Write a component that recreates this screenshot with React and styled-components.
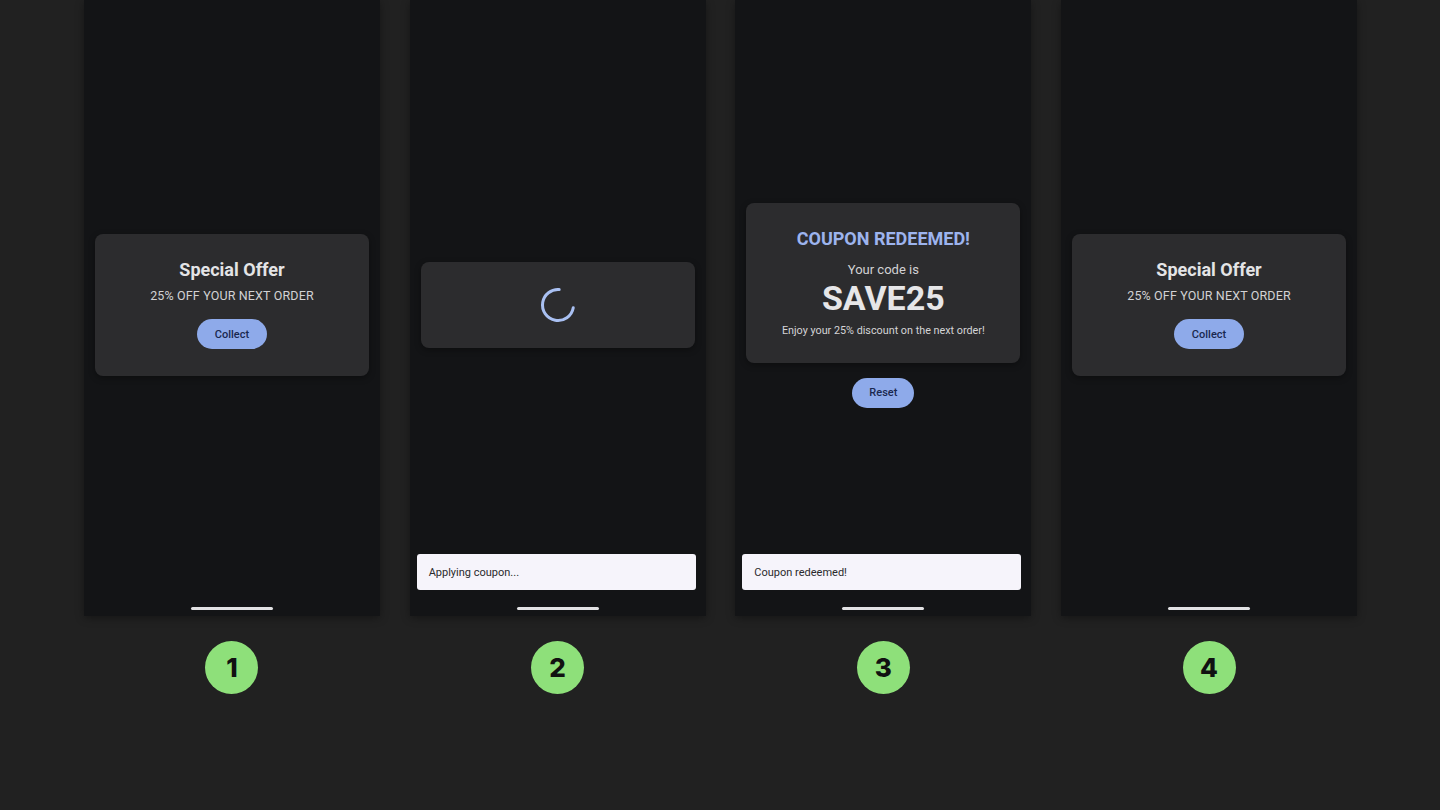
import React from 'react';
import styled, { createGlobalStyle } from 'styled-components';

const GlobalStyle = createGlobalStyle`
  html, body {
    margin: 0;
    padding: 0;
    background: #212121;
  }
  body {
    font-family: Roboto, "Noto Sans", sans-serif;
  }
`;

const Page = styled.main`
  width: 1440px;
  height: 810px;
  overflow: hidden;
  background: #212121;
  display: flex;
  justify-content: center;
  gap: 29.7px;
  padding-left: 1px;
  box-sizing: border-box;
`;

const Column = styled.section`
  width: 296px;
  display: flex;
  flex-direction: column;
  align-items: center;
`;

const Phone = styled.div`
  position: relative;
  width: 296px;
  height: 616px;
  background: #131416;
  box-shadow: 0 2px 8px rgba(0, 0, 0, 0.35);
  display: flex;
  flex-direction: column;
`;

const Screen = styled.div`
  flex: 1;
  display: flex;
  flex-direction: column;
  align-items: center;
  justify-content: center;
  padding: 3px 11px 0;
`;

const HomeBar = styled.div`
  height: 9px;
  display: flex;
  justify-content: center;
  align-items: flex-start;

  &::before {
    content: '';
    width: 82px;
    height: 3px;
    border-radius: 2px;
    background: #e2e2e4;
  }
`;

const Card = styled.div`
  width: 100%;
  box-sizing: border-box;
  background: #2c2c2e;
  border-radius: 8px;
  box-shadow: 0 2px 6px rgba(0, 0, 0, 0.35);
  display: flex;
  flex-direction: column;
  align-items: center;
  padding: ${p => p.$pad || '24px 16px'};
`;

const Title = styled.h2`
  margin: 0;
  font-size: 18px;
  line-height: 24px;
  font-weight: 700;
  color: ${p => (p.$accent ? '#9db4ee' : '#e4e4e6')};
`;

const Sub = styled.p`
  margin: ${p => p.$mt || '5px'} 0 0;
  font-size: ${p => (p.$spaced ? '12.5px' : '13px')};
  line-height: 18px;
  letter-spacing: ${p => (p.$spaced ? '0.15px' : '0')};
  color: #d2d2d4;
`;

const Code = styled.div`
  margin-top: -1px;
  font-size: 34px;
  line-height: 40px;
  font-weight: 700;
  color: #e6e6e8;
`;

const Note = styled.p`
  margin: 5px 0 0;
  font-size: 10.8px;
  line-height: 16px;
  color: #d4d4d6;
`;

const Pill = styled.button`
  margin-top: ${p => p.$mt || '14px'};
  height: 30px;
  padding: 0 ${p => p.$px || '17.5px'};
  border: 0;
  border-radius: 16px;
  background: #8eaaea;
  color: #1a2850;
  font-family: Roboto, sans-serif;
  font-size: 11px;
  font-weight: 500;
`;

const Snackbar = styled.div`
  position: absolute;
  left: 7px;
  right: 10px;
  bottom: 26px;
  height: 36px;
  box-sizing: border-box;
  padding: 0 12px;
  display: flex;
  align-items: center;
  background: #f6f4fb;
  border-radius: 3px;
  font-size: 11px;
  color: #2a2a2c;
`;

const Badge = styled.div`
  margin-top: 25px;
  width: 53px;
  height: 53px;
  border-radius: 50%;
  background: #8ee07a;
  display: flex;
  align-items: center;
  justify-content: center;
  font-family: Inter, "Open Sans", sans-serif;
  font-size: 26px;
  font-weight: 800;
  color: #111;
`;

const Spinner = () => (
  <svg width="36" height="36" viewBox="0 0 36 36">
    <circle
      cx="18"
      cy="18"
      r="15.5"
      fill="none"
      stroke="#a9c0f2"
      strokeWidth="3"
      strokeLinecap="round"
      strokeDasharray="71 100"
      transform="rotate(10 18 18)"
    />
  </svg>
);

const OfferCard = () => (
  <Card $pad="24px 16px 27px">
    <Title>Special Offer</Title>
    <Sub $spaced>25% OFF YOUR NEXT ORDER</Sub>
    <Pill>Collect</Pill>
  </Card>
);

const App = () => (
  <>
    <GlobalStyle />
    <Page>
      <Column>
        <Phone>
          <Screen>
            <OfferCard />
          </Screen>
          <HomeBar />
        </Phone>
        <Badge>1</Badge>
      </Column>

      <Column>
        <Phone>
          <Screen>
            <Card $pad="25px 16px">
              <Spinner />
            </Card>
          </Screen>
          <Snackbar>Applying coupon...</Snackbar>
          <HomeBar />
        </Phone>
        <Badge>2</Badge>
      </Column>

      <Column>
        <Phone>
          <Screen>
            <Card $pad="24px 16px">
              <Title $accent>COUPON REDEEMED!</Title>
              <Sub $mt="10px">Your code is</Sub>
              <Code>SAVE25</Code>
              <Note>Enjoy your 25% discount on the next order!</Note>
            </Card>
            <Pill $mt="15px" $px="17px">Reset</Pill>
          </Screen>
          <Snackbar>Coupon redeemed!</Snackbar>
          <HomeBar />
        </Phone>
        <Badge>3</Badge>
      </Column>

      <Column>
        <Phone>
          <Screen>
            <OfferCard />
          </Screen>
          <HomeBar />
        </Phone>
        <Badge>4</Badge>
      </Column>
    </Page>
  </>
);

export default App;
